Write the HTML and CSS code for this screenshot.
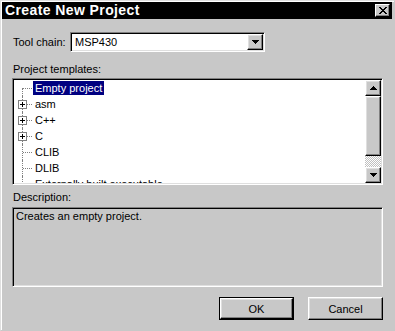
FILE: index.html
```html
<!DOCTYPE html>
<html lang="en">
<head>
  <meta charset="UTF-8" />
  <title>Create New Project</title>
  <link rel="stylesheet" href="styles.css">
</head>
<body>

  <div class="dialog">
    <div class="titlebar">
      <span class="title">Create New Project</span>
      <div class="close-btn">
        <svg width="8" height="7" viewBox="0 0 8 7" shape-rendering="crispEdges">
          <path d="M0 0h2v1h-2zM6 0h2v1h-2zM1 1h2v1h-2zM5 1h2v1h-2zM2 2h4v1h-4zM3 3h2v1h-2zM2 4h4v1h-4zM1 5h2v1h-2zM5 5h2v1h-2zM0 6h2v1h-2zM6 6h2v1h-2z" fill="#000"/>
        </svg>
      </div>
    </div>

    <div class="content">
      <div class="toolchain-row">
        <span class="toolchain-label">Tool chain:</span>
        <div class="combo">
          <span class="combo-value">MSP430</span>
          <div class="btn-3d combo-btn">
            <svg width="7" height="4" viewBox="0 0 7 4" shape-rendering="crispEdges"><path d="M0 0h7v1h-7zM1 1h5v1h-5zM2 2h3v1h-3zM3 3h1v1h-1z" fill="#000"/></svg>
          </div>
        </div>
      </div>

      <div class="field-label templates-label">Project templates:</div>
      <div class="listbox">
        <div class="tree">
          <div class="tree-row first"><span class="tree-label selected">Empty project</span></div>
          <div class="tree-row"><span class="expander"><svg width="9" height="9" viewBox="0 0 9 9" shape-rendering="crispEdges"><rect x="0.5" y="0.5" width="8" height="8" fill="#fff" stroke="#808080"/><path d="M2 4h5v1h-5zM4 2h1v5h-1z" fill="#000"/></svg></span><span class="tree-label">asm</span></div>
          <div class="tree-row"><span class="expander"><svg width="9" height="9" viewBox="0 0 9 9" shape-rendering="crispEdges"><rect x="0.5" y="0.5" width="8" height="8" fill="#fff" stroke="#808080"/><path d="M2 4h5v1h-5zM4 2h1v5h-1z" fill="#000"/></svg></span><span class="tree-label">C++</span></div>
          <div class="tree-row"><span class="expander"><svg width="9" height="9" viewBox="0 0 9 9" shape-rendering="crispEdges"><rect x="0.5" y="0.5" width="8" height="8" fill="#fff" stroke="#808080"/><path d="M2 4h5v1h-5zM4 2h1v5h-1z" fill="#000"/></svg></span><span class="tree-label">C</span></div>
          <div class="tree-row"><span class="tree-label">CLIB</span></div>
          <div class="tree-row"><span class="tree-label">DLIB</span></div>
          <div class="tree-row"><span class="tree-label">Externally built executable</span></div>
        </div>
        <div class="scrollbar">
          <div class="btn-3d scroll-btn">
            <svg width="7" height="4" viewBox="0 0 7 4" shape-rendering="crispEdges"><path d="M3 0h1v1h-1zM2 1h3v1h-3zM1 2h5v1h-5zM0 3h7v1h-7z" fill="#000"/></svg>
          </div>
          <div class="btn-3d scroll-thumb"></div>
          <div class="scroll-track"></div>
          <div class="btn-3d scroll-btn">
            <svg width="7" height="4" viewBox="0 0 7 4" shape-rendering="crispEdges"><path d="M0 0h7v1h-7zM1 1h5v1h-5zM2 2h3v1h-3zM3 3h1v1h-1z" fill="#000"/></svg>
          </div>
        </div>
      </div>

      <div class="field-label desc-label">Description:</div>
      <div class="description">Creates an empty project.</div>

      <div class="buttons">
        <div class="push-btn default"><span class="btn-3d btn-face">OK</span></div>
        <div class="push-btn"><span class="btn-3d btn-face">Cancel</span></div>
      </div>
    </div>
  </div>

</body>
</html>
```

FILE: styles.css
```css
body {
  margin: 0;
  background: #c8c8c8;
  font-family: "Liberation Sans", Arial, sans-serif;
  font-size: 11px;
  color: #000;
}

.dialog {
  box-sizing: border-box;
  width: 395px;
  height: 331px;
  background: #c8c8c8;
  border: 1px solid;
  border-color: #dfdfdf #c8c8c8 #c8c8c8 #dfdfdf;
  box-shadow: inset 1px 1px #fff;
  padding: 1px 2px 1px 1px;
}

/* raised 3d look shared by buttons */
.btn-3d {
  box-sizing: border-box;
  background: #c8c8c8;
  border: 1px solid;
  border-color: #fff #000 #000 #fff;
  box-shadow: inset -1px -1px #808080, inset 1px 1px #dfdfdf;
}

.titlebar {
  height: 17px;
  background: #000;
  display: flex;
  align-items: center;
  justify-content: space-between;
  padding: 0 2px 0 3px;
}

.title {
  color: #fff;
  font-weight: bold;
  font-size: 14px;
  letter-spacing: 0.4px;
  line-height: 17px;
}

.close-btn {
  box-sizing: border-box;
  width: 15px;
  height: 13px;
  background: #c8c8c8;
  border: 1px solid;
  border-color: #fff #000 #000 #fff;
  box-shadow: inset -1px -1px #808080;
  display: flex;
  align-items: center;
  justify-content: center;
}

.content {
  padding: 0 9px 0 10px;
}

.toolchain-row {
  display: flex;
  align-items: center;
  margin-top: 13px;
  height: 20px;
}

.toolchain-label {
  width: 57px;
  padding-left: 1px;
}

.combo {
  box-sizing: border-box;
  width: 195px;
  height: 20px;
  background: #fff;
  border: 1px solid;
  border-color: #808080 #fff #fff #808080;
  box-shadow: inset 1px 1px #000, inset -1px -1px #dfdfdf;
  display: flex;
  align-items: center;
  justify-content: space-between;
  padding: 1px;
}

.combo-value {
  padding-left: 3px;
}

.combo-btn {
  width: 16px;
  height: 16px;
  display: flex;
  align-items: center;
  justify-content: center;
}

.field-label {
  line-height: 13px;
  padding-left: 1px;
}

.templates-label {
  margin-top: 11px;
}

.listbox {
  box-sizing: border-box;
  margin-top: 2px;
  height: 107px;
  background: #fff;
  border: 1px solid;
  border-color: #808080 #fff #fff #808080;
  box-shadow: inset 1px 1px #000, inset -1px -1px #dfdfdf;
  padding: 1px;
  display: flex;
}

.tree {
  flex: 1;
  overflow: hidden;
}

.tree-row {
  position: relative;
  height: 16px;
  display: flex;
  align-items: center;
  white-space: nowrap;
}

.tree-row::before {
  content: "";
  position: absolute;
  left: 8px;
  top: 0;
  bottom: 0;
  border-left: 1px dotted #808080;
}

.tree-row.first::before {
  top: 8px;
}

.tree-row::after {
  content: "";
  position: absolute;
  left: 9px;
  width: 9px;
  top: 8px;
  border-top: 1px dotted #808080;
}

.expander {
  position: absolute;
  left: 4px;
  top: 4px;
  width: 9px;
  height: 9px;
  z-index: 1;
  line-height: 0;
}

.tree-label {
  margin-left: 19px;
  padding: 0 2px;
  line-height: 14px;
}

.tree-label.selected {
  background: #000080;
  color: #fff;
}

.scrollbar {
  width: 16px;
  display: flex;
  flex-direction: column;
}

.scroll-btn {
  height: 16px;
  display: flex;
  align-items: center;
  justify-content: center;
}

.scroll-thumb {
  height: 60px;
}

.scroll-track {
  flex: 1;
  background: repeating-conic-gradient(#fff 0 25%, #c0c0c0 0 50%) 0 0 / 2px 2px;
}

.desc-label {
  margin-top: 6px;
}

.description {
  box-sizing: border-box;
  margin-top: 3px;
  height: 80px;
  border: 1px solid;
  border-color: #808080 #fff #fff #808080;
  box-shadow: inset 1px 1px #000, inset -1px -1px #dfdfdf;
  padding: 2px 3px;
  line-height: 13px;
}

.buttons {
  display: flex;
  justify-content: flex-end;
  gap: 14px;
  margin-top: 10px;
}

.push-btn {
  box-sizing: border-box;
  width: 75px;
  height: 23px;
  display: flex;
}

.push-btn.default {
  border: 1px solid #000;
}

.btn-face {
  flex: 1;
  display: flex;
  align-items: center;
  justify-content: center;
}
```
